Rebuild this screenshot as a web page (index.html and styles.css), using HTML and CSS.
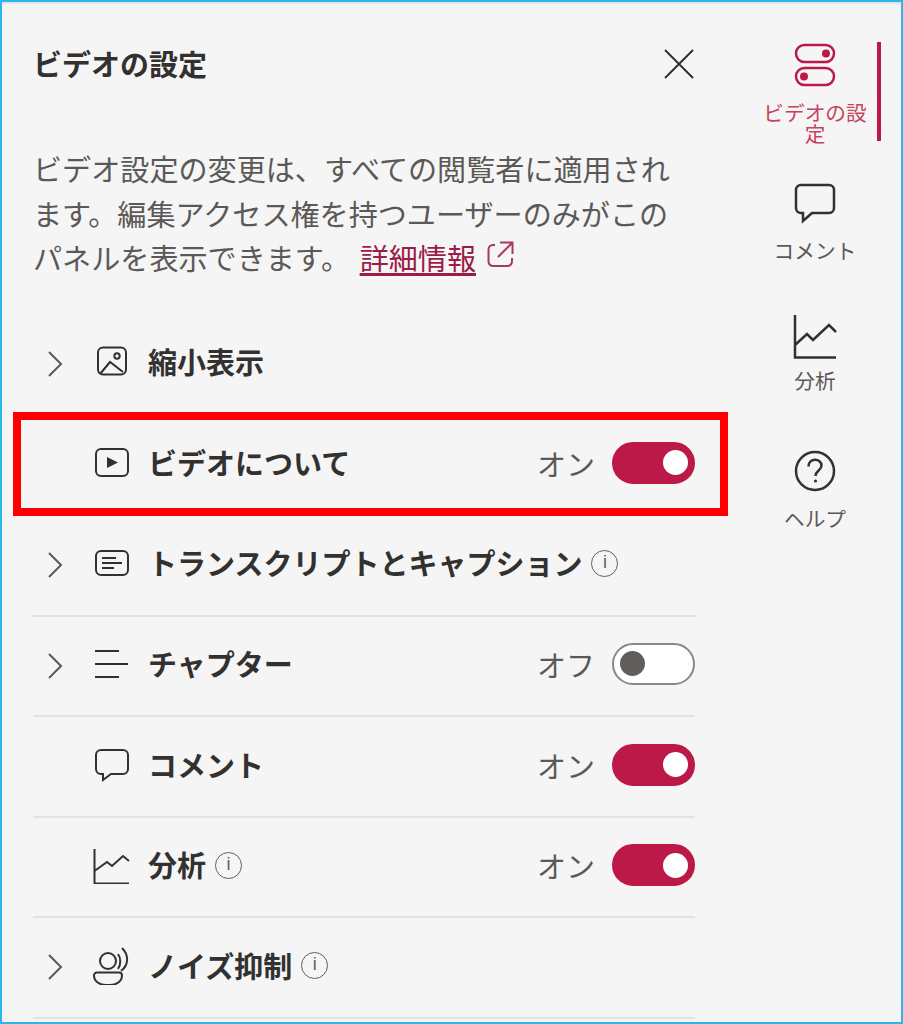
FILE: index.html
```html
<!DOCTYPE html>
<html lang="ja">
<head>
  <meta charset="UTF-8" />
  <meta name="viewport" content="width=device-width, initial-scale=1.0" />
  <title>ビデオの設定</title>
  <link rel="stylesheet" href="styles.css">
</head>
<body>
  <div class="panel">
    <main class="settings">
      <header class="settings-head">
        <h1>ビデオの設定</h1>
        <button class="close" aria-label="閉じる">
          <svg width="32" height="32" viewBox="0 0 32 32"><path d="M2 2l28 28M30 2L2 30" /></svg>
        </button>
      </header>

      <p class="intro">ビデオ設定の変更は、すべての閲覧者に適用されます。編集アクセス権を持つユーザーのみがこのパネルを表示できます。 <a href="#" class="more">詳細情報</a><svg class="external" width="28" height="28" viewBox="0 0 28 28"><path d="M8 4H6a4.500 4.500 0 0 0-4.500 4.500v12A4.500 4.500 0 0 0 6 25h14.500a4.500 4.500 0 0 0 4.500-4.500V17M13 1.500h12.500V13M25 2L11 16" /></svg></p>

      <ul class="rows">
        <!-- Thumbnail -->
        <li class="row">
          <svg class="chevron" width="16" height="26" viewBox="0 0 16 26"><path d="M2 1l12 12L2 25" /></svg>
          <svg class="icon" width="38" height="38" viewBox="0 0 38 38"><rect x="5" y="4.500" width="28" height="27" rx="5" /><circle cx="24" cy="13" r="2.700" /><path d="M7 31l10-12 13 10" /></svg>
          <span class="label">縮小表示</span>
        </li>
        <!-- About the video -->
        <li class="row row-marked">
          <svg class="icon" width="38" height="38" viewBox="0 0 38 38"><rect x="3" y="5" width="32" height="27" rx="5" /><path class="solid" d="M14 13l11 5.500-11 5.500z" /></svg>
          <span class="label">ビデオについて</span>
          <span class="state">オン</span>
          <span class="toggle on"></span>
        </li>
        <!-- Transcript -->
        <li class="row">
          <svg class="chevron" width="16" height="26" viewBox="0 0 16 26"><path d="M2 1l12 12L2 25" /></svg>
          <svg class="icon" width="38" height="38" viewBox="0 0 38 38"><rect x="3" y="7" width="32" height="24" rx="5" /><path d="M9 14h14M9 19h20M9 24h12" /></svg>
          <span class="label">トランスクリプトとキャプション</span>
          <span class="info">i</span>
        </li>
        <!-- Chapters -->
        <li class="row">
          <svg class="chevron" width="16" height="26" viewBox="0 0 16 26"><path d="M2 1l12 12L2 25" /></svg>
          <svg class="icon" width="38" height="38" viewBox="0 0 38 38"><path d="M2 6h24M2 19h33M2 32h24" /></svg>
          <span class="label">チャプター</span>
          <span class="state">オフ</span>
          <span class="toggle"></span>
        </li>
        <!-- Comments -->
        <li class="row">
          <svg class="icon" width="38" height="38" viewBox="0 0 38 38"><path d="M8 4h22a5 5 0 0 1 5 5v14a5 5 0 0 1-5 5H18l-8 6v-6H8a5 5 0 0 1-5-5V9a5 5 0 0 1 5-5z" /></svg>
          <span class="label">コメント</span>
          <span class="state">オン</span>
          <span class="toggle on"></span>
        </li>
        <!-- Analytics -->
        <li class="row">
          <svg class="icon" width="38" height="38" viewBox="0 0 38 38"><path d="M1.500 3v34.500H36M1.500 25L14 16l5 4L30 10l6 5" /></svg>
          <span class="label">分析</span>
          <span class="info">i</span>
          <span class="state">オン</span>
          <span class="toggle on"></span>
        </li>
        <!-- Noise suppression -->
        <li class="row">
          <svg class="chevron" width="16" height="26" viewBox="0 0 16 26"><path d="M2 1l12 12L2 25" /></svg>
          <svg class="icon" width="38" height="38" viewBox="0 0 38 38"><circle cx="15" cy="14" r="8" /><path d="M4 25.500h22a3 3 0 0 1 3 3c0 6-6 9.500-12 9.500h-4c-6 0-12-3.500-12-9.500a3 3 0 0 1 3-3zM25 7c3 4 3 11 0 15M29 1c7 7 7 17-1 23" /></svg>
          <span class="label">ノイズ抑制</span>
          <span class="info">i</span>
        </li>
      </ul>
    </main>

    <nav class="rail">
      <a href="#" class="rail-item active">
        <svg width="44" height="44" viewBox="0 0 44 44"><rect x="3" y="2" width="38" height="17" rx="8.500" /><rect x="3" y="25" width="38" height="17" rx="8.500" /><circle class="dot" cx="33" cy="10.500" r="4" /><circle class="dot" cx="11" cy="33.500" r="4" /></svg>
        <span>ビデオの設定</span>
      </a>
      <a href="#" class="rail-item">
        <svg width="44" height="44" viewBox="0 0 44 44"><path d="M8 4h28a5 5 0 0 1 5 5v18a5 5 0 0 1-5 5H19l-9 8v-8H8a5 5 0 0 1-5-5V9a5 5 0 0 1 5-5z" /></svg>
        <span>コメント</span>
      </a>
      <a href="#" class="rail-item chart">
        <svg width="44" height="44" viewBox="0 0 44 44"><path d="M2 0v42.500h41M2 30l12-11 6 6L36 10l7 7" /></svg>
        <span>分析</span>
      </a>
      <a href="#" class="rail-item">
        <svg width="44" height="44" viewBox="0 0 44 44"><circle cx="22" cy="22" r="19" /><path d="M15.500 17.500c0-9 13-8.500 13-1 0 5-6 5-6 10.500" /><circle class="fill" cx="22.500" cy="32" r="1.600" /></svg>
        <span>ヘルプ</span>
      </a>
    </nav>
  </div>
</body>
</html>
```

FILE: styles.css
```css
:root {
  --text: #323130;
  --text-soft: #5b5957;
  --accent: #bc1948;
  --line: #e3e2e1;
}
* {
  margin: 0;
  padding: 0;
  box-sizing: border-box;
}
body {
  background: #f5f5f5;
  color: var(--text);
  font-family: "Noto Sans CJK JP", "Noto Sans", sans-serif;
  overflow: hidden;
}
svg {
  display: block;
  fill: none;
  stroke: currentColor;
  stroke-width: 2;
  flex: none;
}
.panel {
  display: flex;
  width: 903px;
  height: 1024px;
  border: 2px solid #2bb6ee;
  background: #f5f5f5;
  box-shadow: inset 0 3px 3px -2px rgba(0,0,0,0.12);
}
/* Settings column */
.settings {
  flex: none;
  width: 751px;
  padding: 40px 58px 0 31px;
}
.settings-head {
  display: flex;
  align-items: flex-start;
  justify-content: space-between;
  height: 44px;
  margin-bottom: 60px;
}
.settings-head h1 {
  font-size: 29px;
  line-height: 42px;
  font-weight: 700;
}
.close {
  margin-top: 6px;
  background: none;
  border: none;
  color: var(--text);
}
.intro {
  font-size: 29.1px;
  line-height: 44.5px;
  color: var(--text-soft);
  font-weight: 400;
  height: 133.5px;
  margin-bottom: 35.5px;
  width: 645px;
}
.more {
  margin-left: 3px;
  color: #9b1c47;
  text-decoration: underline;
  text-decoration-thickness: 3px;
  text-underline-offset: 3px;
}
.external {
  display: inline-block;
  vertical-align: 1px;
  margin-left: 11px;
  color: #a83a58;
}
/* Rows */
.rows {
  list-style: none;
}
.row {
  position: relative;
  display: flex;
  align-items: center;
  height: 100.57px;
  padding: 0 0 4px 60px;
  border-bottom: 2px solid var(--line);
}
.chevron {
  position: absolute;
  left: 14px;
  top: 36px;
  color: var(--text-soft);
}
.icon {
  margin-right: 19px;
  color: var(--text);
}
.solid {
  fill: currentColor;
  stroke: none;
}
.label {
  margin-left: -2px;
  font-size: 29px;
  line-height: 38px;
  padding-bottom: 2px;
  font-weight: 700;
}
.info {
  width: 27px;
  height: 27px;
  margin-left: 9px;
  border: 1.5px solid #605e5c;
  border-radius: 50%;
  color: #605e5c;
  font-size: 18px;
  line-height: 23px;
  text-align: center;
  font-family: "Liberation Sans", sans-serif;
}
.state {
  margin-left: auto;
  margin-right: 17px;
  font-size: 29px;
  line-height: 40px;
  color: var(--text-soft);
}
.toggle {
  display: flex;
  align-items: center;
  justify-content: flex-start;
  width: 83px;
  height: 42px;
  padding: 0 5px 0 6px;
  background: #fff;
  border: 2px solid #8a8886;
  border-radius: 21px;
}
.toggle::after {
  content: "";
  width: 25px;
  height: 25px;
  border-radius: 50%;
  background: #605e5c;
}
.toggle.on {
  justify-content: flex-end;
  background: var(--accent);
  border-color: var(--accent);
}
.toggle.on::after {
  background: #fff;
}
/* Red annotation box around the row */
.row-marked::after {
  content: "";
  position: absolute;
  left: -20px;
  right: -33px;
  top: -4px;
  bottom: -2px;
  border: 8px solid #fe0000;
}
/* Right rail */
.rail {
  flex: none;
  width: 128px;
  padding-top: 40px;
  display: flex;
  flex-direction: column;
  gap: 35px;
}
.rail-item {
  display: flex;
  flex-direction: column;
  align-items: center;
  height: 99px;
  padding: 5px 8px 0;
  border-right: 4px solid transparent;
  font-size: 20.7px;
  line-height: 21px;
  color: var(--text-soft);
  text-align: center;
  text-decoration: none;
}
.rail-item svg {
  margin-bottom: 15px;
  color: var(--text);
  stroke-width: 2.5;
}
.rail-item.active {
  padding-top: 1px;
  color: #c8415f;
  border-right-color: var(--accent);
}
.rail-item.active svg {
  color: var(--accent);
}
.rail-item.chart svg {
  margin-bottom: 11px;
}
.dot, .fill {
  fill: currentColor;
  stroke: none;
}
```
